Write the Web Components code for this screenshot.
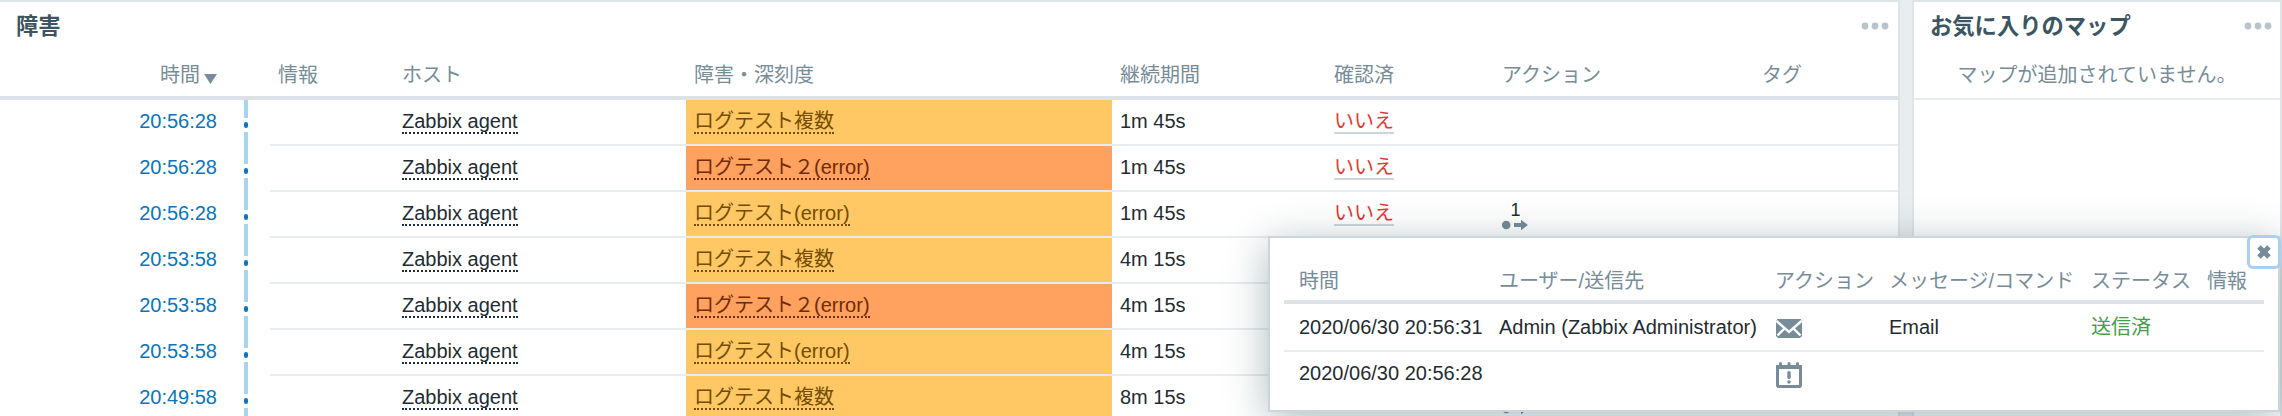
<!DOCTYPE html>
<html lang="ja">
<head>
<meta charset="utf-8">
<title>Dashboard</title>
<style>
html,body{margin:0;height:416px;overflow:hidden;background:#e9edf0}
body{font:20px/30px "Liberation Sans","Noto Sans CJK JP",sans-serif;color:#1f2c33}
</style>
</head>
<body>
<zbx-dashboard></zbx-dashboard>
<script>
const define = (name, css, html) => customElements.define(name, class extends HTMLElement {
  constructor() {
    super();
    this.attachShadow({mode: 'open'}).innerHTML = `<style>*{box-sizing:border-box}${css}</style>` + (typeof html === 'function' ? html(this) : html);
  }
});

define('zbx-menu', ':host{display:block;height:8px}svg{display:block}',
  `<svg width="28" height="8"><g fill="#b8c4cb"><circle cx="4" cy="4" r="3.4"/><circle cx="14" cy="4" r="3.4"/><circle cx="24" cy="4" r="3.4"/></g></svg>`);

define('zbx-widget',
  `:host{display:flex;flex-direction:column;box-sizing:border-box;background:#fff;border:2px solid #dfe4e7;height:440px;overflow:hidden}
   header{display:flex;justify-content:space-between;align-items:center;height:48px;flex:none;padding:0 var(--menu-pad,9px) 0 16px}
   h4{margin:0;font-size:22.3px;line-height:49px;font-weight:bold;color:#3c5563}`,
  `<header><h4><slot name="title"></slot></h4><zbx-menu></zbx-menu></header><slot></slot>`);

define('zbx-link',
  `:host{display:block;width:max-content;line-height:32px;height:29px;box-sizing:border-box;border-bottom:2px dotted currentColor;white-space:nowrap}
   :host([plain]){border-bottom:2px solid #ccd5d9;color:#e33734}`,
  `<slot></slot>`);

define('zbx-actions',
  `:host{display:block;width:26px}
   b{display:block;font-weight:normal;font-size:18px;line-height:18px;text-align:center;padding-left:1px}
   svg{display:block}`,
  `<b><slot></slot></b><svg width="26" height="12"><g fill="#768d99"><circle cx="4.200" cy="6" r="4.300"/><path d="M12 4h7V.8L26 6l-7 5.200V8h-7z"/></g></svg>`);

define('zbx-timeline',
  `:host{display:flex;flex-direction:column;align-items:stretch;width:4px;height:46px}
   i{background:#a8d5ee;flex:none}.up{height:18px}.down{height:14px}
   span{height:14px;padding-top:4px}span:before{content:"";display:block;height:6px;border-radius:2px;background:#0a75bb}`,
  `<i class="up"></i><span></span><i class="down"></i>`);

const cols = '244px 26px 124px 292px 426px 214px 168px 260px 1fr';

define('zbx-problem-head',
  `:host{display:grid;box-sizing:border-box;grid-template-columns:${cols};height:50px;flex:none;border-bottom:4px solid #dce2e6;color:#768d99;line-height:50px;white-space:nowrap}
   div{padding-left:8px;height:46px;line-height:50px}
   .t{display:flex;justify-content:flex-end;padding-right:27px;align-items:flex-start;gap:4px}
   svg{margin-top:24px}`,
  `<div class="t"><span>時間</span><svg width="13" height="10"><path d="M0 0h13L6.500 10z" fill="#768d99"/></svg></div><div></div><div>情報</div><div>ホスト</div><div>障害・深刻度</div><div>継続期間</div><div>確認済</div><div>アクション</div><div>タグ</div>`);

define('zbx-problem',
  `:host{display:grid;grid-template-columns:${cols};height:46px;flex:none;white-space:nowrap}
   div{padding:5px 0 0 8px;border-bottom:2px solid #e8ecef}
   .t,.l{border:0;padding:0}
   .t{color:#0a75bb;text-align:right;padding:6px 27px 0 0}
   .s{background:#ffc865;background-clip:padding-box;color:#734d00}
   .s.high{background:#ffa15f;background-clip:padding-box;color:#722b08}
   .d{padding-top:6px}.a{padding-top:9px}`,
  e => `<div class="t">${e.getAttribute('time')}</div><div class="l"><zbx-timeline></zbx-timeline></div><div></div><div><zbx-link>Zabbix agent</zbx-link></div><div class="s ${e.getAttribute('severity') || ''}"><zbx-link>${e.getAttribute('name')}</zbx-link></div><div class="d">${e.getAttribute('age')}</div><div><zbx-link plain>いいえ</zbx-link></div><div class="a">${e.hasAttribute('actions') ? `<zbx-actions>${e.getAttribute('actions')}</zbx-actions>` : ''}</div><div></div>`);

define('zbx-empty',
  `:host{display:block;box-sizing:border-box;height:50px;flex:none;border-bottom:2px solid #e8ecef;text-align:center;color:#768d99;line-height:50px}`,
  `<slot></slot>`);

define('zbx-icon', ':host{display:block}svg{display:block}', e => ({
  mail: `<svg width="26" height="20"><path fill="#768d99" d="M1 0h24v1l1 1v15l-2 2H2l-2-2V2l1-1z"/><path d="M.5 2L13 13 25.500 2M1.500 16.500l7-7M24.500 16.500l-7-7" fill="none" stroke="#fff" stroke-width="2.400"/></svg>`,
  event: `<svg width="26" height="26"><g fill="#768d99"><path fill-rule="evenodd" d="M0 3h26v21l-1.500 2h-23L0 24zM3 7v16h20V7z"/><rect x="3" width="3" height="5" rx="1.500"/><rect x="11.500" width="3" height="5" rx="1.500"/><rect x="20" width="3" height="5" rx="1.500"/><rect x="11.300" y="9" width="3.400" height="8" rx="1.500"/><circle cx="13" cy="20" r="1.800"/></g></svg>`,
  close: `<svg width="16" height="16"><path d="M3 3l10 10M13 3L3 13" stroke="#768d99" stroke-width="5"/></svg>`
}[e.getAttribute('name')]));

define('zbx-popup',
  `:host{position:absolute;left:1268px;top:236px;width:1012px;height:176px;box-sizing:border-box;border:2px solid #ccd5d9;background:#fff;box-shadow:0 8px 40px rgba(0,39,51,.32);padding:16px 14px}
   .r{display:grid;grid-template-columns:200px 276px 114px 202px 116px 1fr;height:48px;border-bottom:2px solid #e8ecef;white-space:nowrap;padding-left:15px;line-height:47px}
   .h{height:50px;border-bottom:4px solid #dce2e6;color:#768d99;line-height:54px}
   .last{height:46px;border:0;line-height:43px}.ok{color:#429e47}
   button{position:absolute;right:-3px;top:-3px;width:34px;height:34px;border:3px solid #a9cff3;border-radius:6px;background:#fff;padding:0;display:grid;place-items:center}`,
  `<button><zbx-icon name="close"></zbx-icon></button>
   <div class="r h"><span>時間</span><span>ユーザー/送信先</span><span>アクション</span><span>メッセージ/コマンド</span><span>ステータス</span><span>情報</span></div>
   <div class="r"><span>2020/06/30 20:56:31</span><span>Admin (Zabbix Administrator)</span><zbx-icon name="mail" style="padding:15px 0 0 1px"></zbx-icon><span>Email</span><span class="ok">送信済</span></div>
   <div class="r last"><span>2020/06/30 20:56:28</span><span></span><zbx-icon name="event" style="padding:10px 0 0 1px"></zbx-icon></div>`);

define('zbx-dashboard',
  `:host{display:grid;grid-template-columns:1902px 370px;column-gap:12px;margin-left:-2px;position:relative;height:416px;overflow:hidden}
   zbx-popup{margin-left:2px}zbx-widget + zbx-widget{--menu-pad:8px}`,
  `<zbx-widget><span slot="title">障害</span><zbx-problem-head></zbx-problem-head>
   <zbx-problem time="20:56:28" name="ログテスト複数" age="1m 45s"></zbx-problem>
   <zbx-problem time="20:56:28" name="ログテスト２(error)" severity="high" age="1m 45s"></zbx-problem>
   <zbx-problem time="20:56:28" name="ログテスト(error)" age="1m 45s" actions="1"></zbx-problem>
   <zbx-problem time="20:53:58" name="ログテスト複数" age="4m 15s"></zbx-problem>
   <zbx-problem time="20:53:58" name="ログテスト２(error)" severity="high" age="4m 15s"></zbx-problem>
   <zbx-problem time="20:53:58" name="ログテスト(error)" age="4m 15s"></zbx-problem>
   <zbx-problem time="20:49:58" name="ログテスト複数" age="8m 15s" actions="1"></zbx-problem></zbx-widget>
   <zbx-widget><span slot="title">お気に入りのマップ</span><zbx-empty>マップが追加されていません。</zbx-empty></zbx-widget>
   <zbx-popup></zbx-popup>`);
</script>
</body>
</html>
